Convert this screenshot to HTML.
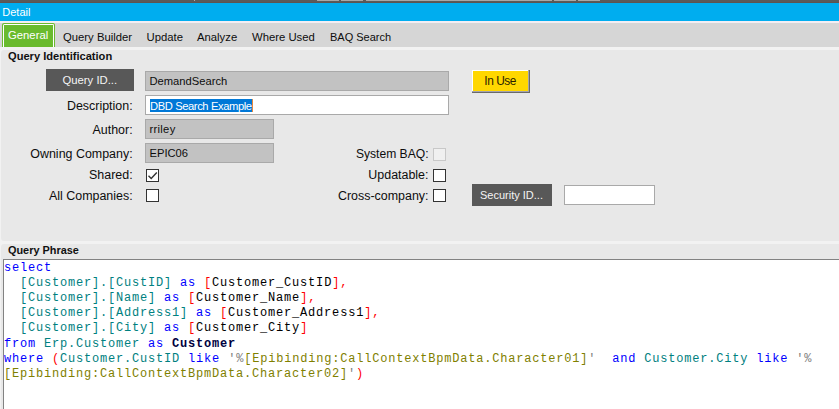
<!DOCTYPE html>
<html><head><meta charset="utf-8">
<style>
*{margin:0;padding:0;box-sizing:border-box}
html,body{width:839px;height:409px;overflow:hidden;background:#ececec}
body{position:relative;font-family:"Liberation Sans",sans-serif;color:#0d0d0d}
.a{position:absolute}
.t{position:absolute;white-space:nowrap;line-height:1}
.lbl{position:absolute;white-space:nowrap;line-height:1;font-size:12.45px;color:#0d0d0d;text-align:right}
.fld{position:absolute;border:1px solid #a9a9a9;background:#c2c2c2}
.cb{position:absolute;width:13px;height:13px;border:1px solid #333;background:#fff}
.btn{position:absolute;background:#585858;color:#f4f4f4}
.code{position:absolute;left:4px;white-space:pre;font-family:"Liberation Mono",monospace;font-size:12px;letter-spacing:0.8px;line-height:15.2px;color:#000}
.k{color:#0000ff}.i{color:#008080}.r{color:#ff0000}.s{color:#808000}.g{color:#808080}.b{font-weight:bold;color:#000040}
</style></head>
<body>
<!-- top dark strip -->
<div class="a" style="left:0;top:0;width:839px;height:3px;background:#5a5a5a"></div><div class="a" style="left:0;top:2px;width:839px;height:1px;background:#5e5450"></div>
<div class="a" style="left:194px;top:0;width:1px;height:1px;background:#aaa"></div>
<div class="a" style="left:317px;top:0;width:22px;height:1px;background:#a8a8a8"></div>
<div class="a" style="left:341px;top:0;width:22px;height:1px;background:#a8a8a8"></div>
<div class="a" style="left:366px;top:0;width:186px;height:1px;background:#a8a8a8"></div>
<div class="a" style="left:554px;top:0;width:22px;height:1px;background:#a8a8a8"></div>
<div class="a" style="left:578px;top:0;width:22px;height:1px;background:#a8a8a8"></div>
<!-- blue bar -->
<div class="a" style="left:0;top:3px;width:839px;height:18px;background:#00adef"></div>
<div class="t" style="left:2.3px;top:7px;font-size:11px;color:#fff">Detail</div>
<!-- light line -->
<div class="a" style="left:0;top:21px;width:839px;height:2px;background:#f3eef3"></div>
<!-- tab bar -->
<div class="a" style="left:0;top:23px;width:839px;height:24px;background:#d6d6d6"></div>
<div class="a" style="left:2px;top:23px;width:53px;height:24px;background:#6abb2e;border-radius:2px 2px 0 0"></div>
<div class="a" style="left:3px;top:24px;width:51px;height:23px;border:1px solid #fff;border-bottom:none;border-radius:1.5px 1.5px 0 0"></div>
<div class="t" style="left:8px;top:29.5px;font-size:11.3px;color:#fff">General</div>
<div class="t" style="left:63px;top:32px;font-size:11.3px">Query Builder</div>
<div class="t" style="left:146.5px;top:32px;font-size:11.3px">Update</div>
<div class="t" style="left:197px;top:32px;font-size:11.3px">Analyze</div>
<div class="t" style="left:252px;top:32px;font-size:11.3px">Where Used</div>
<div class="t" style="left:330px;top:32px;font-size:11px">BAQ Search</div>
<!-- light line under tabs -->
<div class="a" style="left:0;top:47px;width:839px;height:362px;background:#f2f2f2"></div>
<!-- panel 1 -->
<div class="a" style="left:1px;top:50px;width:838px;height:191px;background:#e8e8e8;border-radius:3px 0 0 3px"></div>
<div class="t" style="left:8px;top:50.5px;font-size:11.1px;font-weight:bold;color:#111">Query Identification</div>
<div class="btn" style="left:46px;top:69px;width:88px;height:22px"></div>
<div class="t" style="left:62.5px;top:75px;font-size:11.3px;color:#f4f4f4">Query ID...</div>
<div class="fld" style="left:145px;top:71px;width:304px;height:20px"></div>
<div class="t" style="left:149.5px;top:76px;font-size:11.2px">DemandSearch</div>
<div class="a" style="left:472px;top:70px;width:58px;height:23px;background:#6a6a6a"></div><div class="a" style="left:472px;top:70px;width:57px;height:22px;background:#a4a4ae"></div><div class="a" style="left:472px;top:70px;width:56px;height:21px;background:#fff"></div><div class="a" style="left:473px;top:71px;width:55px;height:20px;background:#ffd700"></div>
<div class="t" style="left:484.3px;top:75.8px;font-size:11.9px;letter-spacing:-0.45px;color:#2a1e00">In Use</div>

<div class="lbl" style="right:706.4px;top:99.5px">Description:</div>
<div class="fld" style="left:145px;top:95px;width:304px;height:20px;background:#fff"></div>
<div class="a" style="left:150px;top:99px;width:102px;height:13px;background:#0078d7"></div><div class="a" style="left:252px;top:99px;width:1px;height:13px;background:#e8883a"></div>
<div class="t" style="left:150px;top:101px;font-size:11.2px;letter-spacing:-0.4px;color:#fff">DBD Search Example</div>

<div class="lbl" style="right:706.4px;top:123.5px">Author:</div>
<div class="fld" style="left:145px;top:119px;width:129px;height:20px"></div>
<div class="t" style="left:149.5px;top:124px;font-size:11.2px;letter-spacing:0.3px">rriley</div>

<div class="lbl" style="right:706.4px;top:147.5px">Owning Company:</div>
<div class="fld" style="left:145px;top:143px;width:129px;height:20px"></div>
<div class="t" style="left:149.5px;top:148px;font-size:11.2px">EPIC06</div>

<div class="lbl" style="right:706.4px;top:168.5px">Shared:</div>
<div class="cb" style="left:146px;top:169px"></div>
<svg class="a" style="left:146px;top:169px" width="13" height="13" viewBox="0 0 13 13"><path d="M2.5 6.8 L5.2 9.5 L10.8 3.6" fill="none" stroke="#333" stroke-width="1.4"/></svg>

<div class="lbl" style="right:706.4px;top:189.5px">All Companies:</div>
<div class="cb" style="left:146px;top:189px"></div>

<div class="lbl" style="right:410.5px;top:147.8px;font-size:12.1px">System BAQ:</div>
<div class="cb" style="left:433px;top:148px;border-color:#c8c8c8;background:#f0f0f0"></div>
<div class="lbl" style="right:410.5px;top:168.5px">Updatable:</div>
<div class="cb" style="left:433px;top:169px"></div>
<div class="lbl" style="right:410.5px;top:189.5px">Cross-company:</div>
<div class="cb" style="left:433px;top:189px"></div>

<div class="btn" style="left:472px;top:184px;width:80px;height:22px"></div>
<div class="t" style="left:480px;top:190px;font-size:11px;color:#f4f4f4">Security ID...</div>
<div class="fld" style="left:564px;top:185px;width:91px;height:20px;background:#fff"></div>

<!-- panel 2 -->
<div class="a" style="left:1px;top:244px;width:838px;height:165px;background:#e8e8e8;border-radius:3px 0 0 0"></div>
<div class="t" style="left:8px;top:244.5px;font-size:10.9px;font-weight:bold;color:#111">Query Phrase</div>
<div class="a" style="left:3px;top:259px;width:836px;height:150px;background:#fff;border-top:1px solid #828282;border-left:1px solid #828282"></div>
<div class="code" style="top:260.5px"><span class="k">select</span>
  <span class="i">[Customer].[CustID]</span> <span class="k">as</span> <span class="r">[</span>Customer_CustID<span class="r">],</span>
  <span class="i">[Customer].[Name]</span> <span class="k">as</span> <span class="r">[</span>Customer_Name<span class="r">],</span>
  <span class="i">[Customer].[Address1]</span> <span class="k">as</span> <span class="r">[</span>Customer_Address1<span class="r">],</span>
  <span class="i">[Customer].[City]</span> <span class="k">as</span> <span class="r">[</span>Customer_City<span class="r">]</span>
<span class="k">from</span> <span class="i">Erp.Customer</span> <span class="k">as</span> <span class="b">Customer</span>
<span class="k">where</span> <span class="r">(</span><span class="i">Customer.CustID</span> <span class="k">like</span> <span class="g">'%</span><span class="s">[Epibinding:CallContextBpmData.Character01]</span><span class="g">'</span>  <span class="k">and</span> <span class="i">Customer.City</span> <span class="k">like</span> <span class="g">'%</span>
<span class="s">[Epibinding:CallContextBpmData.Character02]</span><span class="g">'</span><span class="r">)</span></div>
</body></html>
